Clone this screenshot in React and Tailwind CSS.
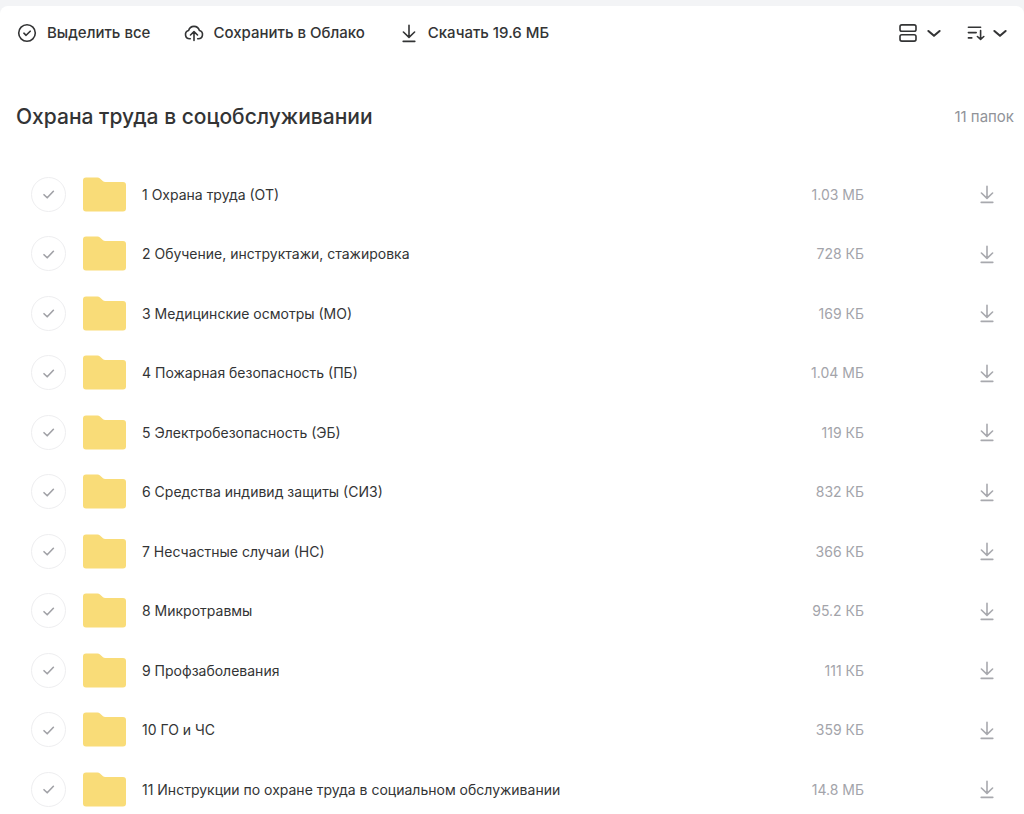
import React from 'react';

const folders = [
  { name: '1 Охрана труда (ОТ)', size: '1.03 МБ' },
  { name: '2 Обучение, инструктажи, стажировка', size: '728 КБ' },
  { name: '3 Медицинские осмотры (МО)', size: '169 КБ' },
  { name: '4 Пожарная безопасность (ПБ)', size: '1.04 МБ' },
  { name: '5 Электробезопасность (ЭБ)', size: '119 КБ' },
  { name: '6 Средства индивид защиты (СИЗ)', size: '832 КБ' },
  { name: '7 Несчастные случаи (НС)', size: '366 КБ' },
  { name: '8 Микротравмы', size: '95.2 КБ' },
  { name: '9 Профзаболевания', size: '111 КБ' },
  { name: '10 ГО и ЧС', size: '359 КБ' },
  { name: '11 Инструкции по охране труда в социальном обслуживании', size: '14.8 МБ' },
];

function Icon({ className = 'w-5 h-5', strokeWidth = 1.6, children }) {
  return (
    <svg
      viewBox="0 0 20 20"
      fill="none"
      stroke="currentColor"
      strokeWidth={strokeWidth}
      strokeLinecap="round"
      strokeLinejoin="round"
      aria-hidden="true"
      className={`shrink-0 ${className}`}
    >
      {children}
    </svg>
  );
}

function DownloadIcon() {
  return (
    <Icon>
      <path d="M10 2.3v11.9M4.4 9l5.6 5.4L15.6 9M4.2 18.4h11.6" />
    </Icon>
  );
}

function ChevronIcon() {
  return (
    <Icon strokeWidth={2.1}>
      <path d="M4.4 8l5.6 4.8L15.6 8" />
    </Icon>
  );
}

function FolderIcon() {
  return (
    <svg viewBox="0 0 43 35" aria-hidden="true" className="w-[43px] h-[35px] shrink-0">
      <path
        d="M3 .5h11.5c1 0 1.8.3 2.5 1l3 2.7c.6.5 1.3.8 2.2.8H40a3 3 0 0 1 3 3v23.500a3 3 0 0 1-3 3H3a3 3 0 0 1-3-3v-28a3 3 0 0 1 3-3z"
        fill="#f9dc78"
      />
    </svg>
  );
}

function Toolbar() {
  return (
    <div className="flex items-center justify-between h-[54px] pl-[17px] pr-[14px] text-[15px] font-medium">
      <div className="flex items-center gap-[34px]">
        <button type="button" className="flex items-center gap-[10px] cursor-pointer">
          <Icon>
            <circle cx="10" cy="10" r="8.3" />
            <path d="M6.900 10.200l2.200 2.100 4.100-4.100" />
          </Icon>
          Выделить все
        </button>
        <button type="button" className="flex items-center gap-[9px] cursor-pointer">
          <Icon>
            <path d="M6.300 15.700H5.700a4.200 4.200 0 0 1-1.100-8.250 5.600 5.600 0 0 1 10.800 0 4.200 4.200 0 0 1-1.100 8.250h-.6" />
            <path d="M10 17.500V9M6.500 12L10 8.700l3.500 3.300" />
          </Icon>
          Сохранить в Облако
        </button>
        <button type="button" className="flex items-center gap-[9px] cursor-pointer">
          <DownloadIcon />
          Скачать 19.6 МБ
        </button>
      </div>
      <div className="flex items-center gap-[22px]">
        <button type="button" aria-label="Вид" className="flex items-center gap-[6px] cursor-pointer">
          <Icon>
            <rect x="2" y="1.9" width="16" height="6.3" rx="1.8" />
            <rect x="2" y="11.8" width="16" height="6.3" rx="1.8" />
          </Icon>
          <ChevronIcon />
        </button>
        <button type="button" aria-label="Сортировка" className="flex items-center gap-1 cursor-pointer">
          <Icon>
            <path d="M2.400 4.300h12.200M2.400 9.600h7.800M2.400 14.900h3.400" />
            <path d="M14.600 7.600v8.600M11.400 13.500l3.200 2.900 3.200-2.900" />
          </Icon>
          <ChevronIcon />
        </button>
      </div>
    </div>
  );
}

function FolderRow({ id, name, size }) {
  return (
    <li className="flex items-center h-9 pl-[31px] pr-[27px]">
      <label
        htmlFor={id}
        className="relative flex items-center justify-center w-[35px] h-[35px] shrink-0 rounded-full border border-[#eeeef0] text-[#a0a1a6] cursor-pointer"
      >
        <input id={id} type="checkbox" aria-label={`Выбрать ${name}`} className="sr-only" />
        <Icon>
          <path d="M5 10.700l3.200 3.100 6.200-6.500" />
        </Icon>
      </label>
      <a href="#" className="flex flex-1 items-center min-w-0 ml-[17px] gap-4">
        <FolderIcon />
        <span className="truncate">{name}</span>
      </a>
      <span className="text-[#a3a4aa] whitespace-nowrap">{size}</span>
      <button
        type="button"
        aria-label={`Скачать ${name}`}
        className="ml-[113px] text-[#a8a9ae] cursor-pointer"
      >
        <DownloadIcon />
      </button>
    </li>
  );
}

export default function App() {
  return (
    <div className="flex flex-col min-h-screen pt-[6px] bg-[#f3f4f6] font-['Inter','Liberation_Sans',sans-serif] text-[#333435]">
      <main className="flex flex-col flex-1 pb-[7px] bg-white rounded-t-lg">
        <Toolbar />
        <div className="flex items-center justify-between mt-[41px] mb-[43px] pl-4 pr-[10px]">
          <h1 className="text-[21px] leading-8 font-medium">Охрана труда в соцобслуживании</h1>
          <span className="text-[15px] text-[#919399]">11 папок</span>
        </div>
        <ul className="flex flex-col flex-1 justify-between gap-5 text-[14px]">
          {folders.map((folder, i) => (
            <FolderRow key={folder.name} id={`folder-${i + 1}`} name={folder.name} size={folder.size} />
          ))}
        </ul>
      </main>
    </div>
  );
}
